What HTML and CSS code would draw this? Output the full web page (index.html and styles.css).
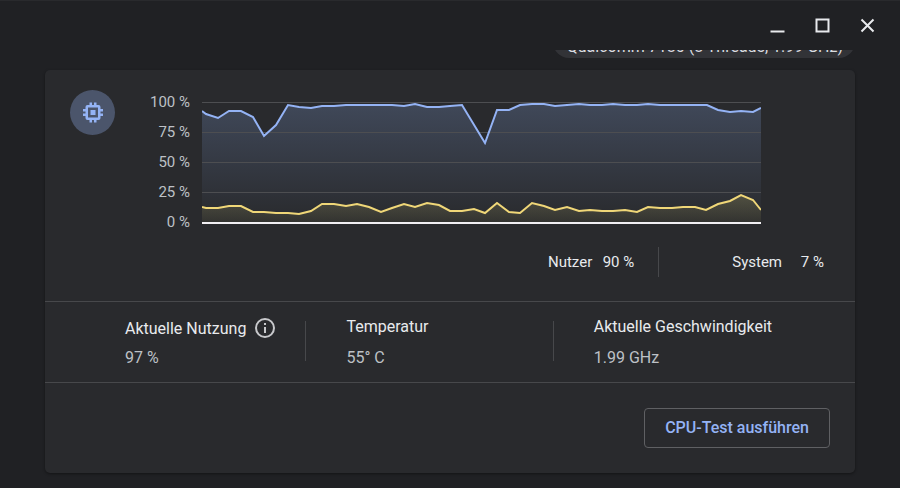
FILE: index.html
```
<!DOCTYPE html>
<html lang="de">
<head>
  <meta charset="UTF-8">
  <meta name="viewport" content="width=device-width, initial-scale=1.0">
  <title>Diagnose</title>
  <link rel="stylesheet" href="styles.css">
</head>
<body>
  <header class="titlebar">
    <button class="window-btn" type="button" aria-label="Minimieren">
      <svg width="16" height="16" viewBox="0 0 16 16"><path d="M.5 13.5h14" /></svg>
    </button>
    <button class="window-btn" type="button" aria-label="Maximieren">
      <svg width="16" height="16" viewBox="0 0 16 16"><path d="M1.5 1.5h12v12h-12z" /></svg>
    </button>
    <button class="window-btn" type="button" aria-label="Schließen">
      <svg width="16" height="16" viewBox="0 0 16 16"><path d="M1.5 1.5l12 12M13.5 1.5l-12 12" /></svg>
    </button>
  </header>

  <main class="content">
    <div class="chip">Qualcomm 7180 (8 Threads, 1.99 GHz)</div>

    <section class="card">
      <div class="usage">
        <div class="cpu-icon">
          <svg width="24" height="24" viewBox="0 0 24 24">
            <path fill-rule="evenodd" d="M8.5 1.5H11V4h2V1.5h2.500V4h2a2 2 0 0 1 2 2v2H22v2.500h-2.500v2H22V15h-2.500v2a2 2 0 0 1-2 2h-2v2.500H13V19h-2v2.500H8.500V19h-2a2 2 0 0 1-2-2v-2H2v-2.500h2.500v-2H2V8h2.500V6a2 2 0 0 1 2-2h2zM7 6.500v10h10v-10zM9.500 9h5v5h-5z" />
          </svg>
        </div>
        <div class="axis">
          <span>100 %</span>
          <span>75 %</span>
          <span>50 %</span>
          <span>25 %</span>
          <span>0 %</span>
        </div>
        <svg class="chart" viewBox="0 0 559 122" preserveAspectRatio="none">
          <defs>
            <linearGradient id="userFill" x1="0" y1="0" x2="0" y2="1">
              <stop offset="0" stop-color="#8fb2f4" stop-opacity="0.22" />
              <stop offset="1" stop-color="#8fb2f4" stop-opacity="0" />
            </linearGradient>
            <linearGradient id="systemFill" x1="0" y1="0" x2="0" y2="1">
              <stop offset="0" stop-color="#f0e070" stop-opacity="0.18" />
              <stop offset="1" stop-color="#f0e070" stop-opacity="0.05" />
            </linearGradient>
          </defs>
          <polygon fill="url(#userFill)" points="0,9 4,12 16,16 27,9 39,9 51,15 62,34 74,23 86,3 97,5 109,6 120,4 132,4 144,3 190,3 202,4 213,2 225,5 237,5 248,4 260,3 283,41 295,8 307,8 318,3 330,2 342,2 353,4 365,3 377,2 388,3 400,3 411,2 423,3 435,3 446,2 458,3 505,3 516,8 528,10 539,9 551,10 559,6 559,120 0,120" />
          <polygon fill="url(#systemFill)" points="0,105 4,106 16,106 27,104 39,104 51,110 62,110 74,111 86,111 97,112 109,109 120,102 132,102 144,104 155,102 167,105 179,110 190,106 202,102 213,105 225,101 237,103 248,109 260,109 272,107 283,111 295,101 307,110 318,111 330,101 342,104 353,108 365,105 377,109 388,108 400,109 411,109 423,108 435,110 446,105 458,106 470,106 481,105 493,105 504,108 516,102 528,99 539,93 551,98 559,108 559,120 0,120" />
          <path class="grid-line" d="M0 .5h559M0 30.5h559M0 60.5h559M0 90.5h559" />
          <polyline class="line user" points="0,9 4,12 16,16 27,9 39,9 51,15 62,34 74,23 86,3 97,5 109,6 120,4 132,4 144,3 190,3 202,4 213,2 225,5 237,5 248,4 260,3 283,41 295,8 307,8 318,3 330,2 342,2 353,4 365,3 377,2 388,3 400,3 411,2 423,3 435,3 446,2 458,3 505,3 516,8 528,10 539,9 551,10 559,6" />
          <polyline class="line system" points="0,105 4,106 16,106 27,104 39,104 51,110 62,110 74,111 86,111 97,112 109,109 120,102 132,102 144,104 155,102 167,105 179,110 190,106 202,102 213,105 225,101 237,103 248,109 260,109 272,107 283,111 295,101 307,110 318,111 330,101 342,104 353,108 365,105 377,109 388,108 400,109 411,109 423,108 435,110 446,105 458,106 470,106 481,105 493,105 504,108 516,102 528,99 539,93 551,98 559,108" />
          <path class="base-line" d="M0 121h559" />
        </svg>
      </div>

      <div class="legend">
        <div class="legend-item"><span>Nutzer</span><span class="legend-value">90 %</span></div>
        <div class="legend-item"><span>System</span><span class="legend-value">7 %</span></div>
      </div>

      <div class="stats">
        <div class="stat">
          <div class="stat-label">
            Aktuelle Nutzung
            <svg class="info" width="24" height="24" viewBox="0 0 24 24">
              <circle cx="12" cy="11" r="9" />
              <path d="M12 6v2M12 10v6" />
            </svg>
          </div>
          <div class="stat-value">97 %</div>
        </div>
        <div class="stat">
          <div class="stat-label">Temperatur</div>
          <div class="stat-value">55° C</div>
        </div>
        <div class="stat">
          <div class="stat-label">Aktuelle Geschwindigkeit</div>
          <div class="stat-value">1.99 GHz</div>
        </div>
      </div>

      <div class="actions">
        <button class="test-btn" type="button">CPU-Test ausführen</button>
      </div>
    </section>
  </main>
</body>
</html>
```
FILE: styles.css
```
* {
  box-sizing: border-box;
}

body {
  margin: 0;
  background-color: #202124;
  color: #e8eaed;
  font-family: Roboto, "Liberation Sans", sans-serif;
  font-size: 16px;
  line-height: 20px;
}

.titlebar {
  display: flex;
  justify-content: flex-end;
  gap: 13px;
  height: 50px;
  padding: 9px 16px;
  border-top: 1px solid #292a2d;
}

.window-btn {
  display: flex;
  align-items: center;
  justify-content: center;
  width: 32px;
  height: 32px;
  padding: 0;
  border: none;
  background: none;
  cursor: pointer;
}

.window-btn svg {
  fill: none;
  stroke: #e8eaed;
  stroke-width: 2;
}

.content {
  display: flex;
  flex-direction: column;
  overflow: hidden;
  padding: 0 45px 15px;
}

/* header chip, scrolled under the title bar */
.chip {
  align-self: flex-end;
  margin: -24px 0 12px;
  padding: 11px 12px 1px 14px;
  border-radius: 16px;
  background-color: #323337;
  color: #dadce0;
}

.card {
  border-radius: 5px;
  background-color: #292a2d;
  box-shadow: 0 1px 3px rgba(0, 0, 0, 0.4);
}

.usage {
  display: flex;
  align-items: flex-start;
  padding: 20px 94px 0 25px;
}

.cpu-icon {
  display: flex;
  align-items: center;
  justify-content: center;
  width: 45px;
  height: 45px;
  border-radius: 50%;
  background-color: #4b556b;
}

.cpu-icon svg {
  fill: #94b3f5;
}

.axis {
  display: flex;
  flex-direction: column;
  gap: 10px;
  width: 75px;
  margin-top: 2px;
  color: #bdc1c6;
  font-size: 15px;
  text-align: right;
}

.chart {
  flex: 1;
  min-width: 0;
  height: 122px;
  margin: 12px 0 0 12px;
}

.grid-line {
  fill: none;
  stroke: #4d4e51;
}

.line {
  fill: none;
  stroke-width: 2;
}

.user {
  stroke: #94b3f5;
}

.system {
  stroke: #f0d778;
}

.base-line {
  stroke: #f1eff3;
  stroke-width: 2;
}

.legend {
  display: flex;
  justify-content: flex-end;
  padding: 15px 31px 24px 0;
  font-size: 15px;
}

.legend-item {
  display: flex;
  align-items: center;
  gap: 10px;
  height: 30px;
}

.legend-item + .legend-item {
  margin-left: 24px;
  padding-left: 73px;
  border-left: 1px solid #47484b;
}

.legend-value {
  min-width: 32px;
  text-align: right;
}

.stats {
  display: grid;
  grid-template-columns: 27fr 37fr 37fr;
  padding: 19px 55px 21px 80px;
  border-top: 1px solid #47484b;
  border-bottom: 1px solid #47484b;
}

.stat {
  display: flex;
  flex-direction: column;
  justify-content: space-between;
  height: 40px;
  white-space: nowrap;
}

.stat + .stat {
  padding-left: 40px;
  border-left: 1px solid #47484b;
}

.stat-label {
  display: flex;
  align-items: center;
  gap: 7px;
  margin-top: -4px;
}

.stat-value {
  margin-bottom: -7px;
  color: #bdc1c6;
}

.info {
  fill: none;
  stroke: #c8c9cc;
  stroke-width: 2;
}

.actions {
  display: flex;
  justify-content: flex-end;
  padding: 25px;
}

.test-btn {
  height: 40px;
  padding: 0 20px 2px;
  border: 1px solid #5f6063;
  border-radius: 4px;
  background: none;
  color: #94b3f5;
  font: 500 16px Roboto, "Liberation Sans", sans-serif;
  cursor: pointer;
}
```
